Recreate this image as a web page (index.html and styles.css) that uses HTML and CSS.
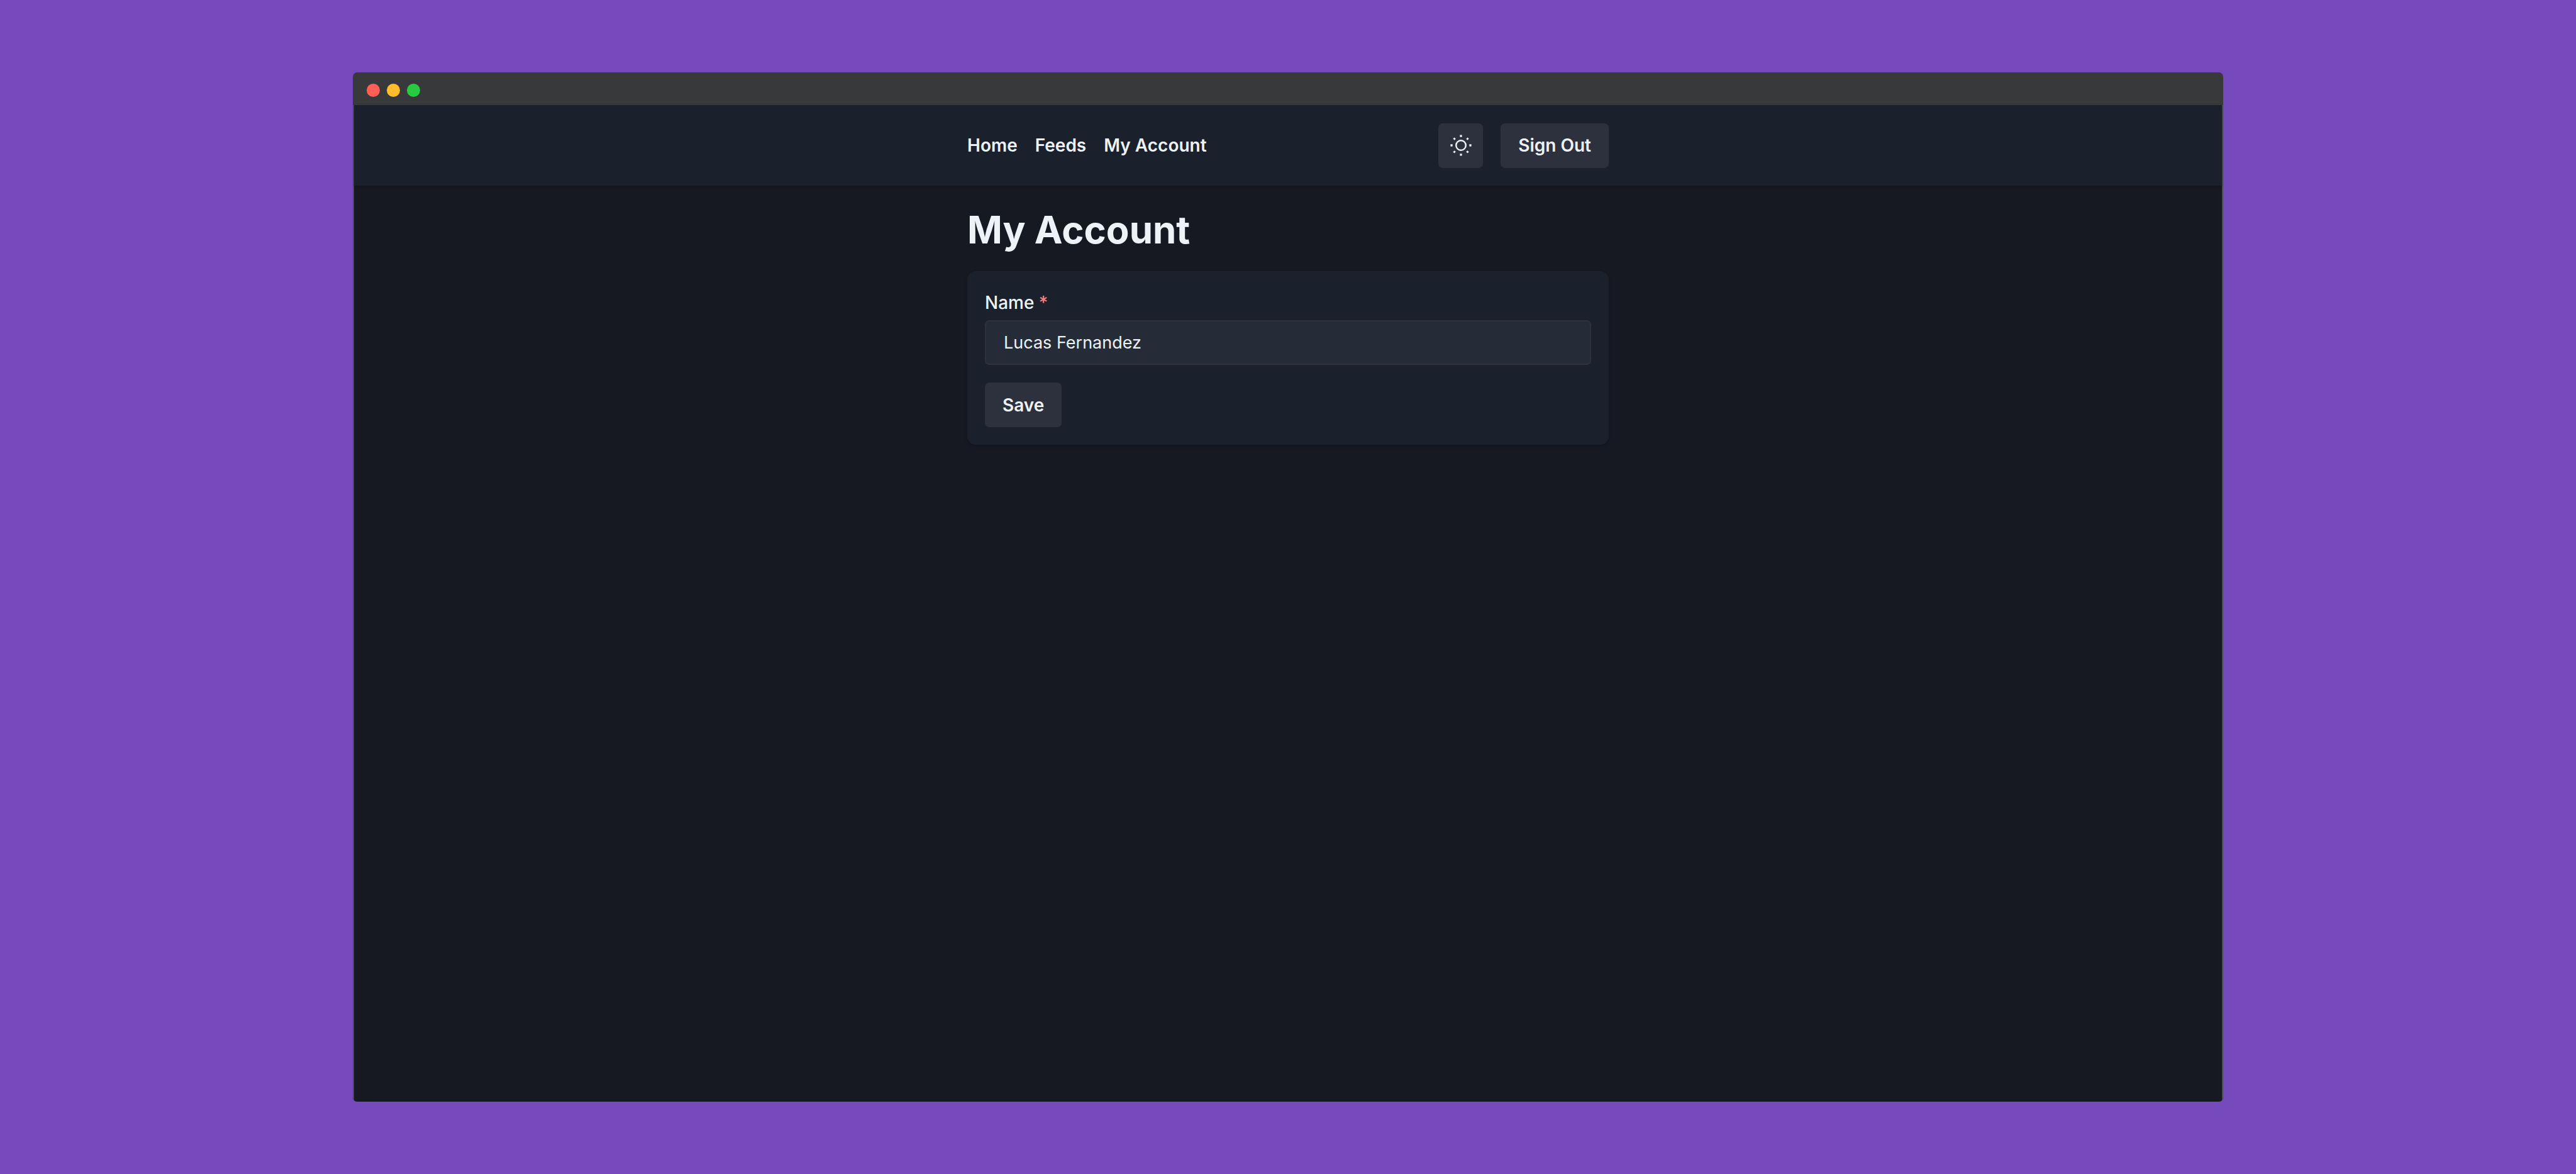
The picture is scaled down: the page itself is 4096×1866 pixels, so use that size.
FILE: index.html
```html
<!DOCTYPE html>
<html lang="en">
<head>
  <meta charset="utf-8">
  <title>My Account</title>
  <link rel="stylesheet" href="styles.css">
</head>
<body>
  <div class="window">
    <div class="titlebar">
      <span class="dot dot-close"></span>
      <span class="dot dot-minimize"></span>
      <span class="dot dot-zoom"></span>
    </div>
    <div class="page">
      <header class="header">
        <div class="container header-row">
          <nav class="nav">
            <a href="#">Home</a>
            <a href="#">Feeds</a>
            <a href="#">My Account</a>
          </nav>
          <div class="actions">
            <button type="button" class="button button-icon" aria-label="Toggle color mode">
              <svg class="icon" viewBox="-22 -22 44 44" aria-hidden="true">
                <circle r="9.5" fill="none" stroke="currentColor" stroke-width="3"/>
                <g fill="currentColor">
                  <path d="M-2-20.3h4v4h-4zM-2 16.3h4v4h-4zM-20.3-2h4v4h-4zM16.3-2h4v4h-4z"/>
                  <path transform="rotate(45)" d="M-1.8-20h3.6v4h-3.6zM-1.8 16h3.6v4h-3.6zM-20-1.8h4v3.6h-4zM16-1.8h4v3.6h-4z"/>
                </g>
              </svg>
            </button>
            <button type="button" class="button">Sign Out</button>
          </div>
        </div>
      </header>
      <main class="container main">
        <h1 class="title">My Account</h1>
        <form class="card">
          <div class="field">
            <label class="label" for="name">Name <span class="required">*</span></label>
            <input class="input" id="name" type="text" value="Lucas Fernandez">
          </div>
          <button type="button" class="button">Save</button>
        </form>
      </main>
    </div>
  </div>
</body>
</html>
```
FILE: styles.css
```css
* {
  box-sizing: border-box;
}

body {
  margin: 0;
  min-height: 100vh;
  padding: 115px 561px;
  display: flex;
  background: #764abc;
  color: #edf2f7;
  font: 400 28px/44px Inter, "Liberation Sans", sans-serif;
}

.window {
  flex: 1;
  display: flex;
  flex-direction: column;
  border-radius: 7px;
  overflow: hidden;
  background: #38393a;
}

.titlebar {
  display: flex;
  align-items: center;
  gap: 11px;
  height: 52px;
  padding: 4px 22px 0;
}

.dot {
  width: 21px;
  height: 21px;
  border-radius: 50%;
}

.dot-close {
  background: #ff5f57;
}

.dot-minimize {
  background: #ffbd2e;
}

.dot-zoom {
  background: #28ca41;
}

.page {
  flex: 1;
  border: solid #494d54;
  border-width: 0 2px;
  background: #161922;
}

.header {
  display: flex;
  align-items: center;
  min-height: 128px;
  background: #1a202c;
  box-shadow: 0 2px 5px rgba(0, 0, 0, 0.2);
}

.container {
  width: 100%;
  max-width: 1020px;
  margin: 0 auto;
}

.header-row,
.nav,
.actions {
  display: flex;
  align-items: center;
  gap: 28px;
}

.header-row {
  justify-content: space-between;
}

.nav a {
  color: inherit;
  font-weight: 600;
  text-decoration: none;
}

.button {
  display: inline-flex;
  align-items: center;
  justify-content: center;
  height: 71px;
  padding: 0 28px;
  border: 0;
  border-radius: 7px;
  background: #2d313d;
  color: inherit;
  font: inherit;
  font-weight: 600;
}

.button-icon {
  width: 71px;
  padding: 0;
}

.icon {
  width: 36px;
  height: 36px;
}

.main {
  padding: 28px 0;
}

.title {
  margin: 0 0 24px;
  font-size: 60px;
  font-weight: 700;
  line-height: 84px;
}

.card {
  display: flex;
  flex-direction: column;
  align-items: flex-start;
  gap: 28px;
  padding: 28px;
  border-radius: 14px;
  background: #1a202c;
  box-shadow: 0 2px 5px rgba(0, 0, 0, 0.15);
}

.field {
  display: flex;
  flex-direction: column;
  gap: 6px;
  width: 100%;
}

.label {
  font-weight: 500;
}

.required {
  color: #fc8181;
}

.input {
  width: 100%;
  height: 71px;
  padding: 0 28px;
  border: 2px solid #2d323d;
  border-radius: 7px;
  outline: 0;
  background: #262c37;
  color: inherit;
  font: inherit;
  font-size: 27px;
}
```
